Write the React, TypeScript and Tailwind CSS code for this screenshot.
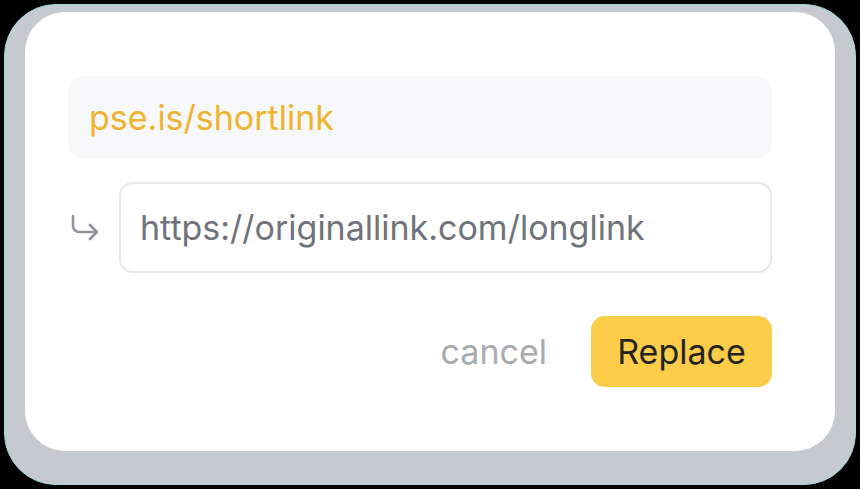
export default function App() {
  return (
    <div className="w-[860px] h-[489px] bg-black p-1 font-['Inter',sans-serif]">
      {/* Glass frame */}
      <div className="w-full h-full rounded-[52px] bg-[#c5cad0] border border-[#9fd9dc] pl-[20px] pr-[20px] pt-[7px] pb-[33px]">
        {/* Card */}
        <div className="w-full h-full rounded-[40px] bg-white pl-[43px] pr-[63px] pt-[64px]">
          <div className="h-[82px] rounded-[14px] bg-[#f7f8fa] flex items-center px-[21px]">
            <span className="text-[34px] text-[#f0b330]">pse.is/shortlink</span>
          </div>

          <div className="mt-[24px] flex items-center">
            <div className="w-[51px] flex items-center pl-[2px]">
              <svg width="30" height="28" viewBox="0 0 30 28" fill="none" stroke="#8f959d" strokeWidth="2.6" strokeLinecap="round" strokeLinejoin="round">
                <path d="M3 2v10a6 6 0 0 0 6 6h17" />
                <path d="M20 11l7 7-7 7" />
              </svg>
            </div>
            <div className="flex-1 h-[91px] rounded-[14px] border-2 border-[#e6e8eb] flex items-center px-[19px]">
              <span className="text-[34px] text-[#6f747b]">https://originallink.com/longlink</span>
            </div>
          </div>

          <div className="mt-[43px] flex items-center justify-end gap-[44px]">
            <button className="text-[34px] text-[#a7abb0]">cancel</button>
            <button className="h-[71px] w-[181px] rounded-[14px] bg-[#fdcd49] text-[34px] text-[#222426]">
              Replace
            </button>
          </div>
        </div>
      </div>
    </div>
  );
}
